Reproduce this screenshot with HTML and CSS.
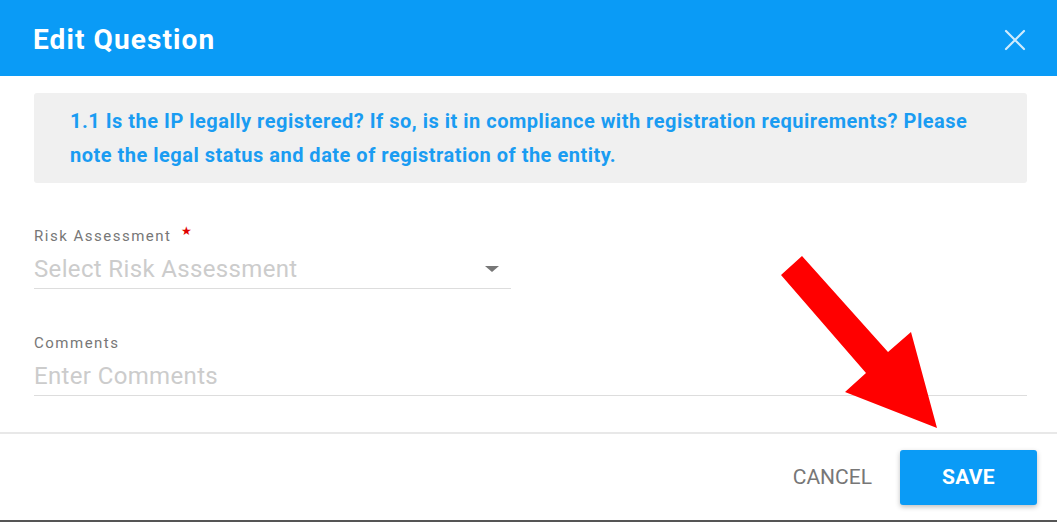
FILE: index.html
```html
<!DOCTYPE html>
<html lang="en">
<head>
    <meta charset="UTF-8">
    <meta name="viewport" content="width=device-width, initial-scale=1.0">
    <title>Edit Question</title>
    <link rel="stylesheet" href="styles.css">
</head>
<body>
    <div class="modal">
        <!-- header -->
        <div class="modalHeader">
            <h1>Edit Question</h1>
            <button class="closeBtn" aria-label="Close">
                <svg width="22" height="22" viewBox="0 0 22 22">
                    <path d="M2 2 L20 20 M20 2 L2 20" stroke="#fff" stroke-width="2.2" stroke-linecap="round" fill="none"/>
                </svg>
            </button>
        </div>

        <!-- body -->
        <div class="modalBody">
            <div class="questionBox">
                1.1 Is the IP legally registered? If so, is it in compliance with registration requirements? Please
                note the legal status and date of registration of the entity.
            </div>

            <div class="field fieldSelect">
                <label>Risk Assessment <span class="required">&#9733;</span></label>
                <div class="selectInput">
                    <span class="placeholder">Select Risk Assessment</span>
                    <span class="caret"></span>
                </div>
            </div>

            <div class="field fieldText">
                <label>Comments</label>
                <input type="text" class="textInput" placeholder="Enter Comments">
            </div>
        </div>

        <!-- footer -->
        <div class="modalFooter">
            <button class="cancelBtn">CANCEL</button>
            <button class="saveBtn">SAVE</button>
        </div>

        <!-- annotation arrow -->
        <svg class="arrow" width="1057" height="522" viewBox="0 0 1057 522">
            <polygon points="781,275 802,256 888,352 911,332 937,428 845,392 866,373" fill="#ff0000"/>
        </svg>
    </div>
</body>
</html>
```

FILE: styles.css
```css
body {
    margin: 0;
    padding: 0;
    font-family: Roboto, "Liberation Sans", sans-serif;
    background-color: #fff;
}

.modal {
    position: relative;
    width: 1057px;
    height: 522px;
    box-sizing: border-box;
    border-bottom: 2px solid #555;
    display: flex;
    flex-direction: column;
    overflow: hidden;
}

/* header */
.modalHeader {
    height: 76px;
    flex-shrink: 0;
    box-sizing: border-box;
    background-color: #0a9bf6;
    padding: 3px 31px 0 33px;
    display: flex;
    align-items: center;
    justify-content: space-between;
}

.modalHeader h1 {
    margin: 0;
    color: #fff;
    font-size: 28px;
    font-weight: 700;
    letter-spacing: 1.1px;
}

.closeBtn {
    background: none;
    border: none;
    padding: 0;
    width: 22px;
    height: 22px;
    cursor: pointer;
    opacity: 0.8;
}

/* body */
.modalBody {
    padding: 17px 30px 0 34px;
    flex: 1;
}

.questionBox {
    background-color: #f0f0f0;
    border-radius: 3px;
    padding: 11px 36px;
    line-height: 34px;
    font-size: 20px;
    font-weight: 700;
    letter-spacing: 0.5px;
    color: #1a9cf2;
}

.field {
    margin-top: 43px;
}

.field label {
    display: block;
    font-size: 15px;
    line-height: 20px;
    letter-spacing: 1.5px;
    color: #777;
}

.required {
    color: #e00000;
    font-size: 12px;
    position: relative;
    top: -6px;
    margin-left: 4px;
}

.selectInput,
.textInput {
    height: 42px;
    box-sizing: border-box;
    border-bottom: 1px solid #ddd;
    font-size: 24px;
    letter-spacing: 0.35px;
    color: #ccc;
}

.selectInput {
    display: flex;
    align-items: center;
    padding-top: 3px;
    width: 477px;
    justify-content: space-between;
}

.placeholder {
    color: #ccc;
}

.caret {
    width: 0;
    height: 0;
    margin-right: 12px;
    border-left: 7px solid transparent;
    border-right: 7px solid transparent;
    border-top: 6px solid #777;
}

.fieldText {
    margin-top: 44px;
}

.textInput {
    display: block;
    width: 100%;
    height: 43px;
    border: none;
    border-bottom: 1px solid #ddd;
    padding: 4px 0 0 0;
    font-family: inherit;
    outline: none;
    background: none;
}

.textInput::placeholder {
    color: #ccc;
}

/* footer */
.modalFooter {
    height: 86px;
    flex-shrink: 0;
    border-top: 2px solid #e8e8e8;
    display: flex;
    align-items: center;
    justify-content: flex-end;
    padding-right: 20px;
    gap: 12px;
}

.cancelBtn {
    background: none;
    border: none;
    font-family: inherit;
    font-size: 21px;
    color: #777;
    padding: 10px 16px;
    cursor: pointer;
}

.saveBtn {
    width: 137px;
    height: 55px;
    background-color: #0a9bf6;
    color: #fff;
    border: none;
    border-radius: 3px;
    font-family: inherit;
    font-size: 21px;
    font-weight: 700;
    letter-spacing: 0.3px;
    box-shadow: 0 2px 5px rgba(0, 0, 0, 0.25);
    cursor: pointer;
}

/* annotation */
.arrow {
    position: absolute;
    top: 0;
    left: 0;
    pointer-events: none;
}
```
